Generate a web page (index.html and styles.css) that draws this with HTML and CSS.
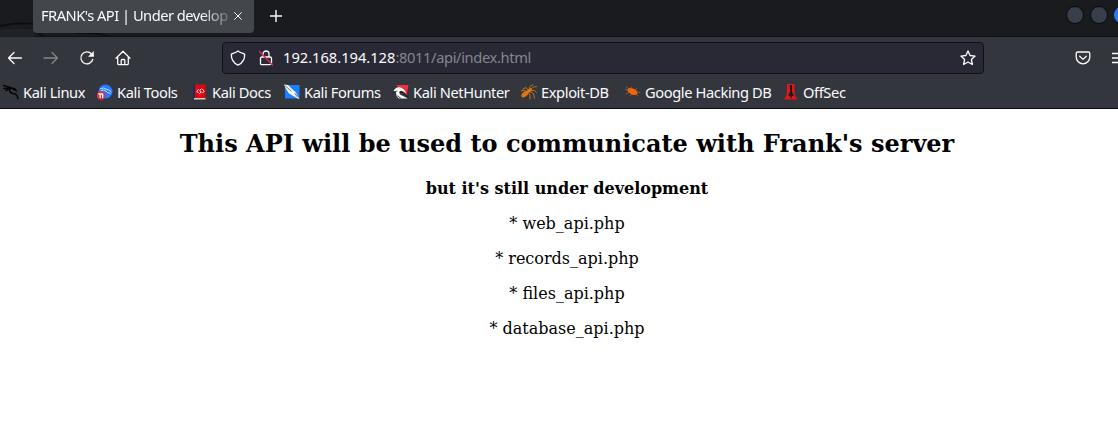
FILE: index.html
```html
<!DOCTYPE html>
<html lang="en">
<head>
<meta charset="utf-8">
<title>FRANK's API | Under development</title>
<link rel="stylesheet" href="styles.css">
</head>
<body>
<header class="tabstrip">
  <svg class="dragon-art" viewBox="0 0 120 37"><path d="M0 26Q18 22 34 24M0 33Q20 27 34 30L46 38M76 33Q96 32 110 37" fill="none" stroke="#0d0e11" stroke-width="2"/><path d="M0 30Q18 27 34 29V37H0Z" fill="#202227"/></svg>
  <div class="tab"><span class="tab-title">FRANK's API | Under develop</span>
    <svg class="tab-close" viewBox="0 0 8 8"><path d="M.6.6l6.8 6.8M7.4.6L.6 7.4"/></svg>
  </div>
  <svg class="new-tab" viewBox="0 0 12 12"><path d="M6 .3v11.4M.3 6h11.4"/></svg>
  <div class="window-buttons"><i></i><i></i><i class="active"></i></div>
</header>
<nav class="toolbar">
  <div class="nav-buttons">
    <svg viewBox="0 0 16 16"><path d="M14.500 8H1.500M7 2.500L1.500 8L7 13.500"/></svg>
    <svg class="disabled" viewBox="0 0 16 16"><path d="M1 8h13.500M9 2.500L14.500 8L9 13.500"/></svg>
    <svg viewBox="0 0 16 16"><path d="M13.700 9.500A6 6 0 1 1 12.500 4L14 5.500"/><path d="M14.800 1v5.800H9z" fill="#fbfbfe" stroke="none"/></svg>
    <svg viewBox="0 0 16 16"><path d="M1 8.200L8 1.300l7 6.900M2.700 7v6.500q0 1.200 1.200 1.200h8.200q1.200 0 1.200-1.200V7M6.200 14.500v-4q0-1 1-1h1.600q1 0 1 1v4"/></svg>
  </div>
  <div class="urlbar">
    <svg class="shield" viewBox="0 0 16 16"><path d="M8 .9C6 2.500 3.800 3 1.300 4C1.200 9 3.200 13 8 15.200C12.800 13 14.800 9 14.700 4C12.200 3 10 2.500 8 .9Z"/></svg>
    <svg class="lock" viewBox="0 0 16 16"><path d="M5 7V4a3 3 0 0 1 6 0V7M4 7h8q1.500 0 1.500 1.500v4.700q0 1.500-1.500 1.500H4q-1.500 0-1.500-1.500V8.500Q2.500 7 4 7Z"/><path d="M1.500 1.500l13 13.500" class="slash"/></svg>
    <span class="url"><b>192.168.194.128</b>:8011/api/index.html</span>
    <svg class="star" viewBox="0 0 16 16"><path d="M8 .9l2.100 4.600 5 .6-3.700 3.400 1 5L8 12l-4.400 2.500 1-5L.9 6.100l5-.6z"/></svg>
  </div>
  <svg class="pocket" viewBox="0 0 16 16"><path d="M2.700 2h10.600q1.500 0 1.500 1.500V7a6.800 6.800 0 0 1-13.600 0V3.500Q1.200 2 2.700 2ZM4.700 6.300L8 9.400l3.300-3.100"/></svg>
  <svg class="menu" viewBox="0 0 14 12"><path d="M0 1.500h14M0 6h14M0 10.500h14"/></svg>
</nav>
<nav class="bookmarks">
  <a><svg viewBox="0 0 16 16"><path d="M.5 1.500Q5 2.500 8.500 4Q12 4 13.500 7M1 4.500Q5 3.500 8 4.500M3 6.500L6 5M7 4.500Q5.500 8.500 10 9.500Q14 9.500 15 14.500M10 5L13 6.500" fill="none" stroke="#030405" stroke-width="1.500"/></svg>Kali Linux</a>
  <a><svg viewBox="0 0 16 16"><circle cx="8.500" cy="7.500" r="7" fill="#2777ff"/><path d="M3.500 4.500Q7 3 10 5.500Q13 5 14 8M4 6.500Q7 5 9 7Q10 9 13 9.500" fill="none" stroke="#c5dcff" stroke-width="1"/><circle cx="4" cy="11.500" r="4.200" fill="#ed2839"/><path d="M1.800 10h1.400v3.500M4.300 10h1.400v3.500" fill="none" stroke="#fff"/></svg>Kali Tools</a>
  <a><svg viewBox="0 0 16 16"><path d="M1.500 .5h2V15h-2z" fill="#102b61"/><path d="M3 .5h10.500v13.500H3z" fill="#dc0710"/><path d="M2 14h11.500v1.500H2z" fill="#d9c9c9"/><path d="M6.300 5.500L4.800 7.200l1.500 1.600M10.700 5.500l1.500 1.700-1.500 1.600M9.300 5L7.700 6.500l1.600 1.300L7.800 9.500" fill="none" stroke="#fff" stroke-width="1"/></svg>Kali Docs</a>
  <a><svg viewBox="0 0 16 16"><path d="M1 1h14.500v13.500H1z" fill="#1b80ff"/><path d="M0 .5L4 1L8 5L12 8.500L13.500 12L15.500 15.500L11 13L5 9.500L1.500 4Z" fill="#f7f7f2"/><path d="M1.500 2L7 7M11 9.500l2 3" stroke="#34343b" stroke-width=".7"/></svg>Kali Forums</a>
  <a><svg viewBox="0 0 16 16"><path d="M3 1h12.500L13.500 12z" fill="#f0303c"/><path d="M.5 7Q3 2 7.500 3.500Q12 5 13 9.500Q9 5.500 6.500 7.500Q5.500 10 9 11.500L15 14.500H6Q3 13 3 8Z" fill="#fff"/><path d="M7.500 8Q11 7.500 14.500 13" fill="none" stroke="#111" stroke-width="1"/><path d="M1 8L4 7M4.500 12l3 2" stroke="#111" stroke-width=".8"/></svg>Kali NetHunter</a>
  <a><svg viewBox="0 0 16 16"><ellipse cx="4" cy="10" rx="4.300" ry="2.400" transform="rotate(-43 4 10)" fill="#dd7908"/><ellipse cx="8.500" cy="6.500" rx="2.700" ry="1.600" transform="rotate(-35 8.500 6.500)" fill="#e87e0a"/><path d="M5 8L3.500 6 0 7M7 6L5 3.500 2 5M8 6L9 2.500 12 .5M9.500 5.500l3-2.500 3-.5M10 6.500h3.500l2 2M9 7.500l3.500 2 1 4.500M7 8l2 3v4" fill="none" stroke="#cf7b14" stroke-width=".9"/></svg>Exploit-DB</a>
  <a><svg viewBox="0 0 16 16"><ellipse cx="7.500" cy="7.500" rx="5.500" ry="3" transform="rotate(25 7.500 7.500)" fill="#f0640c"/><path d="M2 6L0 5M4 5L1.500 2.500M7 5L6 3M10 6l2-2M12 8l3 .5M11 10l2 2M7 10l-2 2M4 8.500L1 10" fill="none" stroke="#b95925" stroke-width=".8"/></svg>Google Hacking DB</a>
  <a><svg viewBox="0 0 16 16"><path d="M4 0h7.500v10l2.500 5.500H1L4 10Z" fill="#dd171b"/><path d="M7 1h2v7l2 4H9l-1 3-1-3H5l2-4z" fill="#271013"/></svg>OffSec</a>
</nav>
<main class="page">
  <h2>This API will be used to communicate with Frank's server</h2>
  <p><strong>but it's still under development</strong></p>
  <p>* web_api.php</p>
  <p>* records_api.php</p>
  <p>* files_api.php</p>
  <p>* database_api.php</p>
</main>
</body>
</html>
```
FILE: styles.css
```css
* { box-sizing: border-box; }
body { margin: 0; width: 1118px; height: 433px; overflow: hidden; background: #fff; font-family: "Noto Sans", sans-serif; color: #fbfbfe; }
svg { flex: none; fill: none; stroke: #fbfbfe; stroke-width: 1.3; stroke-linecap: round; stroke-linejoin: round; }
.tabstrip { position: relative; display: flex; height: 37px; padding-left: 33px; background: #1a1b1f; border-bottom: 1px solid #111216; }
.dragon-art { position: absolute; left: 0; top: 0; width: 120px; height: 37px; stroke: none; }
.tab { position: relative; display: flex; align-items: center; width: 221px; height: 33px; padding: 0 12px 2px 8px; background: #43464c; border-radius: 0 0 4px 4px; }
.tab-title { width: 190px; white-space: nowrap; font-size: 14.67px; letter-spacing: -.5px; line-height: 20px; padding-bottom: 2px; mask-image: linear-gradient(90deg, #000 160px, transparent 195px); }
.tab-close { width: 8px; height: 8px; margin-left: 3px; stroke-width: 1; }
.new-tab { width: 12px; height: 12px; margin: 10px 0 0 16px; stroke-width: 1.4; }
.window-buttons { display: flex; gap: 6px; margin: 6px -14px 0 auto; }
.window-buttons i { width: 18px; height: 18px; border: 1px solid #08090c; border-radius: 50%; background: #383e4a; }
.window-buttons .active { background: #2777ff; border-color: #2777ff; }
.toolbar { display: flex; align-items: center; height: 41px; padding-left: 7px; background: #34363d; overflow: hidden; }
.nav-buttons { display: flex; flex: none; gap: 20px; width: 215px; }
.nav-buttons svg { width: 16px; height: 16px; }
.nav-buttons .disabled { opacity: .4; }
.urlbar { display: flex; flex: none; align-items: center; width: 762px; height: 32px; padding: 0 7px; background: #282934; border: 1px solid #101116; border-radius: 4px; }
.urlbar svg { width: 16px; height: 16px; }
.urlbar .lock { margin: 0 9px 0 12px; }
.lock .slash { stroke: #e22850; }
.url { flex: 1; font-size: 14.67px; letter-spacing: -.36px; line-height: 20px; padding-bottom: 2px; color: #85868e; }
.url b { font-weight: 400; letter-spacing: 0; color: #fbfbfe; }
.pocket { width: 16px; height: 16px; margin-left: 91px; }
.menu { width: 14px; height: 12px; margin-left: 21px; stroke-linecap: butt; }
.bookmarks { display: grid; grid-template-columns: 94px 95px 92px 109px 128px 104px 158px 90px; height: 31px; padding: 0 0 2px 3px; background: #34363d; border-bottom: 1px solid #08090c; }
.bookmarks a { display: flex; align-items: center; gap: 4px; font-size: 14.67px; letter-spacing: -.39px; line-height: 22px; white-space: nowrap; }
.bookmarks svg { width: 16px; height: 16px; stroke: none; }
.page { padding: 21px 0 0 16px; text-align: center; color: #000; font: 16px/19px "DejaVu Serif", serif; }
.page h2 { margin: 0 0 21px; font-size: 24px; line-height: 28px; }
.page p { margin: 0 0 16px; }
```
